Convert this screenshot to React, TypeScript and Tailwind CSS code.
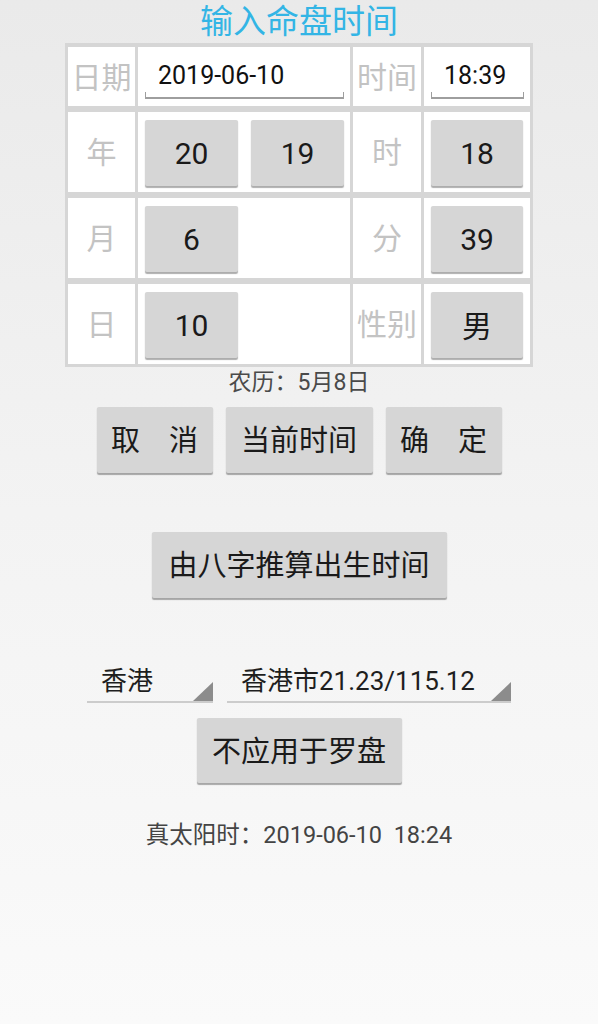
import React from "react";

const FONT = "font-['Roboto','Noto_Sans_CJK_SC',sans-serif]";

function Btn({ children, className = "" }: { children: React.ReactNode; className?: string }) {
  return (
    <div
      className={`flex items-center justify-center rounded-[2px] bg-[#d6d6d6] text-[#1a1a1a] shadow-[0_1.5px_1px_rgba(0,0,0,0.32)] ${className}`}
    >
      {children}
    </div>
  );
}

function Label({ children }: { children: React.ReactNode }) {
  return (
    <div className="flex items-center justify-center bg-white pt-[2px] text-[30px] leading-none text-[#c3c3c3]">
      {children}
    </div>
  );
}

function EditField({ value }: { value: string }) {
  return (
    <div className="flex flex-col bg-white pl-[7px] pr-[6px] pt-[14px]">
      <div className="h-[30px] pl-[13px] text-[25px] leading-[30px] text-[#111]">{value}</div>
      <div className="mt-[1px] h-[7px] border-x border-b-2 border-[#9e9e9e]" />
    </div>
  );
}

function BtnCell({ children, wide = false }: { children: React.ReactNode; wide?: boolean }) {
  return (
    <div className={`flex bg-white pl-[7px] pt-[8px] pb-[6px] ${wide ? "pr-[6px]" : "pr-[7px]"}`}>
      {children}
    </div>
  );
}

function Spinner({ text, width }: { text: string; width: string }) {
  return (
    <div className={`relative flex h-[45px] items-center border-b-2 border-[#cccccc] pl-[14px] ${width}`}>
      <span className="pt-[2px] text-[26px] leading-none text-[#1e1e1e]">{text}</span>
      <svg className="absolute bottom-0 right-0" width="20" height="19" viewBox="0 0 20 19">
        <polygon points="20,0 20,19 0,19" fill="#8c8c8c" />
      </svg>
    </div>
  );
}

export default function App() {
  const grid = "grid grid-cols-[67px_212px_68px_106px] gap-x-[3px]";
  return (
    <div className={`${FONT} flex h-[1024px] w-full flex-col items-center bg-linear-to-b from-[#eaeaea] via-[#f3f3f3] to-[#fafafa]`}>
      <div className="flex h-[43px] items-center justify-center text-[33px] leading-none text-[#33b5e5]">
        输入命盘时间
      </div>

      <div className="flex w-[468px] flex-col gap-y-[6px] bg-[#d6d6d6] px-[3px] pt-[4px] pb-[3px]">
        <div className={`${grid} h-[59px]`}>
          <Label>日期</Label>
          <EditField value="2019-06-10" />
          <Label>时间</Label>
          <EditField value="18:39" />
        </div>

        <div className={`${grid} h-[80px]`}>
          <Label>年</Label>
          <BtnCell wide>
            <div className="flex gap-[13px]">
              <Btn className="h-[66px] w-[93px] text-[30px]">20</Btn>
              <Btn className="h-[66px] w-[93px] text-[30px]">19</Btn>
            </div>
          </BtnCell>
          <Label>时</Label>
          <BtnCell>
            <Btn className="h-[66px] w-[92px] text-[30px]">18</Btn>
          </BtnCell>
        </div>

        <div className={`${grid} h-[80px]`}>
          <Label>月</Label>
          <BtnCell wide>
            <Btn className="h-[66px] w-[93px] text-[30px]">6</Btn>
          </BtnCell>
          <Label>分</Label>
          <BtnCell>
            <Btn className="h-[66px] w-[92px] text-[30px]">39</Btn>
          </BtnCell>
        </div>

        <div className={`${grid} h-[80px]`}>
          <Label>日</Label>
          <BtnCell wide>
            <Btn className="h-[66px] w-[93px] text-[30px]">10</Btn>
          </BtnCell>
          <Label>性别</Label>
          <BtnCell>
            <Btn className="h-[66px] w-[92px] pt-[2px] text-[30px]">男</Btn>
          </BtnCell>
        </div>
      </div>

      <div className="mt-[2px] h-[28px] text-[23px] leading-[28px] text-[#4a4a4a]">农历：5月8日</div>

      <div className="mt-[10px] flex gap-[13px]">
        <Btn className="h-[66px] w-[116px] pt-[4px] text-[29px]">取　消</Btn>
        <Btn className="h-[66px] w-[147px] pt-[4px] text-[29px]">当前时间</Btn>
        <Btn className="h-[66px] w-[116px] pt-[4px] text-[29px]">确　定</Btn>
      </div>

      <Btn className="mt-[59px] h-[66px] w-[295px] pt-[4px] text-[29px]">由八字推算出生时间</Btn>

      <div className="mt-[60px] flex gap-[14px]">
        <Spinner text="香港" width="w-[126px]" />
        <Spinner text="香港市21.23/115.12" width="w-[284px]" />
      </div>

      <Btn className="mt-[15px] h-[65px] w-[205px] pt-[4px] text-[29px]">不应用于罗盘</Btn>

      <div className="mt-[38px] text-[23.5px] leading-[28px] text-[#444]">真太阳时：2019-06-10&nbsp;&nbsp;18:24</div>
    </div>
  );
}
